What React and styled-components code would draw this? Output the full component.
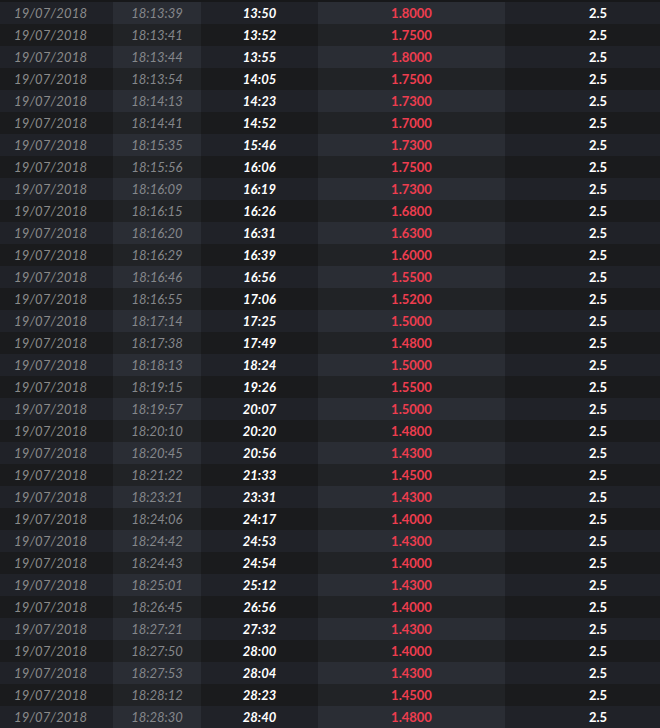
import React from "react";
import styled, { createGlobalStyle } from "styled-components";

const rows = [
  ["18:13:39", "13:50", "1.8000"],
  ["18:13:41", "13:52", "1.7500"],
  ["18:13:44", "13:55", "1.8000"],
  ["18:13:54", "14:05", "1.7500"],
  ["18:14:13", "14:23", "1.7300"],
  ["18:14:41", "14:52", "1.7000"],
  ["18:15:35", "15:46", "1.7300"],
  ["18:15:56", "16:06", "1.7500"],
  ["18:16:09", "16:19", "1.7300"],
  ["18:16:15", "16:26", "1.6800"],
  ["18:16:20", "16:31", "1.6300"],
  ["18:16:29", "16:39", "1.6000"],
  ["18:16:46", "16:56", "1.5500"],
  ["18:16:55", "17:06", "1.5200"],
  ["18:17:14", "17:25", "1.5000"],
  ["18:17:38", "17:49", "1.4800"],
  ["18:18:13", "18:24", "1.5000"],
  ["18:19:15", "19:26", "1.5500"],
  ["18:19:57", "20:07", "1.5000"],
  ["18:20:10", "20:20", "1.4800"],
  ["18:20:45", "20:56", "1.4300"],
  ["18:21:22", "21:33", "1.4500"],
  ["18:23:21", "23:31", "1.4300"],
  ["18:24:06", "24:17", "1.4000"],
  ["18:24:42", "24:53", "1.4300"],
  ["18:24:43", "24:54", "1.4000"],
  ["18:25:01", "25:12", "1.4300"],
  ["18:26:45", "26:56", "1.4000"],
  ["18:27:21", "27:32", "1.4300"],
  ["18:27:50", "28:00", "1.4000"],
  ["18:27:53", "28:04", "1.4300"],
  ["18:28:12", "28:23", "1.4500"],
  ["18:28:30", "28:40", "1.4800"],
];

const GlobalStyle = createGlobalStyle`
  body {
    margin: 0;
    background: #17181a;
    font-family: Lato, "Open Sans", sans-serif;
    overflow: hidden;
  }
`;

const Table = styled.div`
  width: 660px;
  padding-top: 2px;
`;

const Row = styled.div`
  display: grid;
  grid-template-columns: 113px 88px 117px 187px 155px;
  height: 22px;
  background: ${(p) => (p.odd ? "#202228" : "#1a1b1d")};
`;

const Cell = styled.div`
  display: flex;
  align-items: center;
  justify-content: ${(p) => (p.left ? "flex-start" : "center")};
  padding-left: ${(p) => p.pl || 0}px;
  font-size: 13px;
  background: ${(p) =>
    p.shade ? (p.odd ? "#2a2d34" : "#212326") : "transparent"};
`;

const DateText = styled.span`
  font-style: italic;
  color: #8b8b8b;
  letter-spacing: 0.2px;
`;

const TimeText = styled.span`
  font-style: italic;
  color: #85878b;
`;

const Elapsed = styled.span`
  font-style: italic;
  font-weight: 700;
  color: #ffffff;
`;

const Odds = styled.span`
  font-weight: 700;
  color: #ee3d4f;
`;

const Line = styled.span`
  font-weight: 700;
  color: #ffffff;
`;

export default function App() {
  return (
    <>
      <GlobalStyle />
      <Table>
        {rows.map(([time, elapsed, odds], i) => {
          const odd = i % 2 === 0;
          return (
            <Row key={i} odd={odd}>
              <Cell left pl={14}>
                <DateText>19/07/2018</DateText>
              </Cell>
              <Cell shade odd={odd}>
                <TimeText>{time}</TimeText>
              </Cell>
              <Cell>
                <Elapsed>{elapsed}</Elapsed>
              </Cell>
              <Cell shade odd={odd}>
                <Odds>{odds}</Odds>
              </Cell>
              <Cell pl={31}>
                <Line>2.5</Line>
              </Cell>
            </Row>
          );
        })}
      </Table>
    </>
  );
}
